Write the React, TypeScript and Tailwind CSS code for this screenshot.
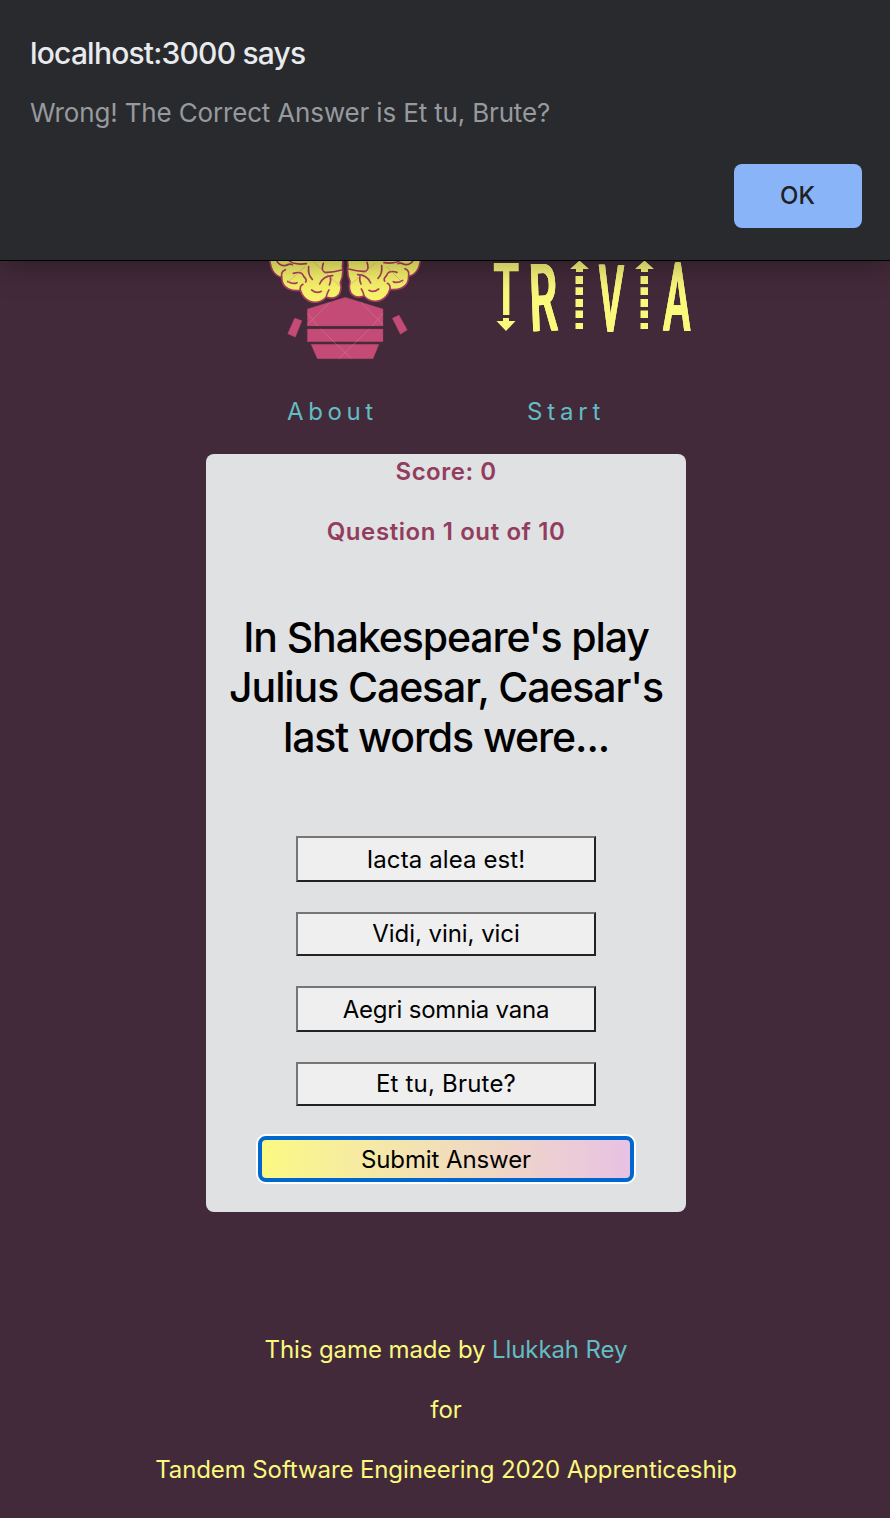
import type { ReactNode } from "react";

const answers = [
  { text: "Iacta alea est!", height: "h-[46px] pt-0.5", spacing: "tracking-[0.1px]" },
  { text: "Vidi, vini, vici", height: "h-11", spacing: "tracking-[-0.05px]" },
  { text: "Aegri somnia vana", height: "h-[46px] pt-0.5", spacing: "tracking-[-0.2px]" },
  { text: "Et tu, Brute?", height: "h-11", spacing: "tracking-[0.2px]" },
];

function BrainHalf() {
  return (
    <g>
      <path
        d="M27 0 Q27 40 37 60 Q46 78 65 82 Q65 108 86 117 Q103 124 121 121 Q129 147 152 155 Q180 162 199 141 Q225 151 239 131 Q246 116 241 98 Q252 72 247 50 Q252 20 240 0Z"
        fill="#f7f36b"
        stroke="#a53c61"
        strokeWidth="5"
      />
      <g fill="none" stroke="#ad3f60" strokeWidth="5" strokeLinecap="round">
        <path d="M49 30 Q59 52 83 45 M78 46 Q91 40 97 44 M65 81 Q62 64 76 59 M83 94 Q99 104 111 98" />
        <path d="M84 30 Q102 46 139 41 M100 70 Q125 62 131 79 Q142 90 137 96 M121 121 Q119 107 129 103" />
        <path d="M146 50 Q143 75 157 88 M190 40 Q182 60 194 67 Q214 69 245 60 M155 120 Q170 132 184 124 M179 102 Q190 77 218 77 M208 105 Q214 91 211 81 M199 139 Q202 127 207 120" />
      </g>
    </g>
  );
}

function BrainLogo() {
  return (
    <svg className="mt-[250px] ml-[260px] h-[120px] w-[170px] shrink-0" viewBox="0 0 510 360" aria-hidden="true">
      <BrainHalf />
      <g transform="translate(511 -3) scale(-1 1)">
        <BrainHalf />
      </g>
      <g fill="#c44b75" stroke="#ad4168" strokeWidth="1">
        <path d="M142 177 L256 142 L369 177 V228 H142Z" />
        <path d="M142 237H369V275H142Z" />
        <path d="M153 283H357L339 326H172Z" />
        <path d="M104 204L126 212L106 262L83 251Z" />
        <path d="M397 205L417 195L442 240L421 253Z" />
      </g>
      <g fill="none" stroke="#d9819d" strokeWidth="2" opacity=".65">
        <path d="M142 190L174 228M142 224L210 157M182 237L274 326M236 326L329 237M302 156L369 224M337 228L369 190M160 35L242 110M270 105L345 40M80 100L135 50M430 100L380 50" />
      </g>
    </svg>
  );
}

function DottedArrow({ x }: { x: number }) {
  return (
    <g transform={`translate(${x} 0)`}>
      <path d="M9.5 10.5L19 19H13V22H6V19H0Z" />
      <path d="M5.5 26H13V34H5.5ZM5.5 37.2H13V45H5.5ZM5.5 49H13V57H5.5ZM5.5 60.5H13V68H5.5ZM5.5 73H13V79H5.5Z" />
    </g>
  );
}

function TriviaLogo() {
  return (
    <svg className="mt-[250px] ml-[50px] h-[95px] w-[220px] shrink-0 overflow-visible font-['Roboto',sans-serif]" viewBox="0 0 220 95" fill="#fbf97c">
      <text transform="translate(13 64.6) scale(.465 .79)" fontSize="92" fontWeight="700">T</text>
      <path d="M23 68H29V71H35.5L26 81L16.5 71H23Z" />
      <g className="[filter:drop-shadow(1px_0_0_#fbf97c)_drop-shadow(0.7px_0_0_#fbf97c)]">
        <text transform="translate(50 81.3) rotate(-2) scale(.475 1)" fontSize="94" fontWeight="500">R</text>
        <text transform="translate(117.3 81.5) rotate(1) scale(.415 1)" fontSize="94" fontWeight="500">V</text>
        <text transform="translate(182.5 80.5) rotate(1) scale(.43 1)" fontSize="96" fontWeight="500">A</text>
      </g>
      <DottedArrow x={90} />
      <DottedArrow x={155} />
    </svg>
  );
}

function AlertDialog() {
  return (
    <div role="alertdialog" className="absolute inset-x-0 top-0 flex h-[261px] flex-col border-b border-black bg-[#292a2d] pt-[33px] pr-7 pl-[30px] shadow-[0_4px_30px_rgba(0,0,0,0.35)]">
      <h1 className="text-[30px] leading-10 font-[450] tracking-[-0.8px] text-[#e8eaed]">localhost:3000 says</h1>
      <p className="mt-[21px] text-[26px] leading-[38px] tracking-[-0.16px] text-[#969a9f]">Wrong! The Correct Answer is Et tu, Brute?</p>
      <button className="mt-8 h-16 w-32 self-end rounded-lg bg-[#8ab4f8] pr-px text-2xl font-medium text-[#202124]">OK</button>
    </div>
  );
}

function FooterLine({ children }: { children: ReactNode }) {
  return <p className="h-[60px] leading-[60px]">{children}</p>;
}

export default function App() {
  return (
    <div className="relative h-[1518px] w-[890px] overflow-hidden bg-[#432a3a] font-['Inter','Liberation_Sans',sans-serif] text-2xl">
      <header className="flex h-[380px] items-start">
        <BrainLogo />
        <TriviaLogo />
      </header>
      <nav className="flex h-[74px] pl-[287px] leading-[64px] tracking-[4.6px] text-[#62bdc3]">
        <a className="w-60">About</a>
        <a className="tracking-[4.8px]">Start</a>
      </nav>
      <main className="ml-[206px] flex h-[758px] w-[480px] flex-col items-center rounded-lg bg-[#e0e1e3] text-center text-black">
        <p className="mt-[3px] h-[30px] leading-[30px] font-semibold tracking-[0.5px] text-[#923d5e]">Score: 0</p>
        <p className="mt-[30px] h-[30px] leading-[30px] font-semibold tracking-[0.6px] text-[#923d5e]">Question 1 out of 10</p>
        <h2 className="mt-[65px] h-[151px] text-[41px] leading-[50px] font-medium tracking-[-1.1px] whitespace-nowrap">
          In Shakespeare's play
          <br />
          Julius Caesar, Caesar's
          <br />
          last words were...
        </h2>
        <div className="mt-[73px] flex flex-col gap-[30px]">
          {answers.map((answer) => (
            <button key={answer.text} className={`w-[300px] border-2 border-t-[#767676] border-r-[#222] border-b-[#222] border-l-[#767676] bg-[#efefef] leading-[40px] ${answer.height} ${answer.spacing}`}>
              {answer.text}
            </button>
          ))}
        </div>
        <button className="mt-[30px] h-[46px] w-[376px] rounded-lg border-4 border-[#0067d0] bg-linear-to-r from-[#fcf980] to-[#e8c1e4] bg-origin-border pt-0.5 leading-[36px] tracking-[-0.1px] ring-2 ring-white">Submit Answer</button>
      </main>
      <footer className="mt-[108px] pl-0.5 text-center tracking-[-0.1px] text-[#fbf97c]">
        <FooterLine>This game made by <a className="text-[#62bdc3]">Llukkah Rey</a></FooterLine>
        <FooterLine>for</FooterLine>
        <FooterLine>Tandem Software Engineering 2020 Apprenticeship</FooterLine>
      </footer>
      <AlertDialog />
    </div>
  );
}
